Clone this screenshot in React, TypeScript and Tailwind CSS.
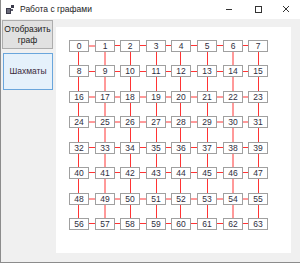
import React from "react";

const LEFTS = [68, 94, 119, 145, 170, 196, 222, 247].map((v) => v - 55);
const TOPS = [40, 65, 91, 116, 142, 167, 193, 218].map((v) => v - 27);
const COL_OFF = [9.5, 10, 10.5, 10.5, 9.5, 10.5, 10, 10.5];
const ROW_OFF = [5.5, 6.5, 6, 6, 5.5, 5.5, 6, 5.5];

const lx = (i: number) => LEFTS[i] + COL_OFF[i];
const ly = (j: number) => TOPS[j] + ROW_OFF[j];

function Graph() {
  const nodes: React.ReactNode[] = [];
  for (let r = 0; r < 8; r++) {
    for (let c = 0; c < 8; c++) {
      const n = r * 8 + c;
      nodes.push(
        <div
          key={n}
          className="absolute w-[20px] h-[12px] border border-[#a0a0a0] bg-white flex items-center justify-center text-[8.5px] leading-none text-[#2e2e40]"
          style={{ left: LEFTS[c], top: TOPS[r], fontFamily: '"Liberation Sans", Arial, sans-serif' }}
        >
          {n}
        </div>
      );
    }
  }
  const lines: React.ReactNode[] = [];
  for (let r = 0; r < 8; r++) {
    for (let c = 0; c < 7; c++) {
      const y = r === 0 && c === 0 ? TOPS[0] + 6 : ly(r);
      lines.push(<line key={`h${r}-${c}`} x1={lx(c)} x2={lx(c + 1)} y1={y} y2={y} stroke="#ff3434" strokeWidth={1} />);
    }
  }
  for (let c = 0; c < 8; c++) {
    lines.push(<line key={`v${c}`} x1={lx(c)} x2={lx(c)} y1={ly(0)} y2={ly(7)} stroke="#ff3434" strokeWidth={1} />);
  }
  return (
    <div className="relative w-[235px] h-[226px] bg-white mt-[8px] ml-[3px]">
      <svg className="absolute left-0 top-0" width={235} height={226}>
        {lines}
      </svg>
      {nodes}
    </div>
  );
}

export default function App() {
  const font = { fontFamily: '"Liberation Sans", Arial, sans-serif' };
  return (
    <div className="w-[300px] h-[263px] bg-[#f0f0f0] border-l border-b border-[#8c8c8c] flex flex-col overflow-hidden" style={font}>
      <div className="h-[19px] bg-white flex items-center shrink-0">
        <svg className="ml-[5px]" width="8" height="9" viewBox="0 0 8 9">
          <rect x="0" y="3" width="5" height="6" fill="#3a3a4a" />
          <rect x="5" y="0" width="3" height="3" fill="#3a3a4a" />
          <rect x="5" y="4" width="2" height="2" fill="#5a5a6a" />
          <rect x="1" y="4" width="3" height="4" fill="#6a6a7a" />
        </svg>
        <span className="ml-[6px] text-[8.5px] text-[#222]">Работа с графами</span>
        <div className="ml-auto flex items-center">
          <svg width="28" height="19" viewBox="0 0 28 19">
            <line x1="10" x2="16" y1="9.5" y2="9.5" stroke="#333" strokeWidth="1" />
          </svg>
          <svg width="28" height="19" viewBox="0 0 28 19">
            <rect x="11.5" y="6.5" width="6" height="6" fill="none" stroke="#333" strokeWidth="1" />
          </svg>
          <svg width="28" height="19" viewBox="0 0 28 19">
            <path d="M11 6 L17 12 M17 6 L11 12" stroke="#333" strokeWidth="1" />
          </svg>
        </div>
      </div>
      <div className="flex flex-row flex-1">
        <div className="flex flex-col pl-[1px] pt-[1px] gap-[4px]">
          <button className="w-[51px] h-[29px] bg-[#e1e1e1] border border-[#adadad] text-[8.5px] leading-[11px] text-[#222] flex items-center justify-center text-center">
            Отобразить
            <br />
            граф
          </button>
          <button className="ml-[1px] w-[50px] h-[37px] bg-[#e5f1fb] border border-[#6aa6dc] text-[8.5px] text-[#3a2a3a] flex items-center justify-center">
            Шахматы
          </button>
        </div>
        <Graph />
      </div>
    </div>
  );
}
